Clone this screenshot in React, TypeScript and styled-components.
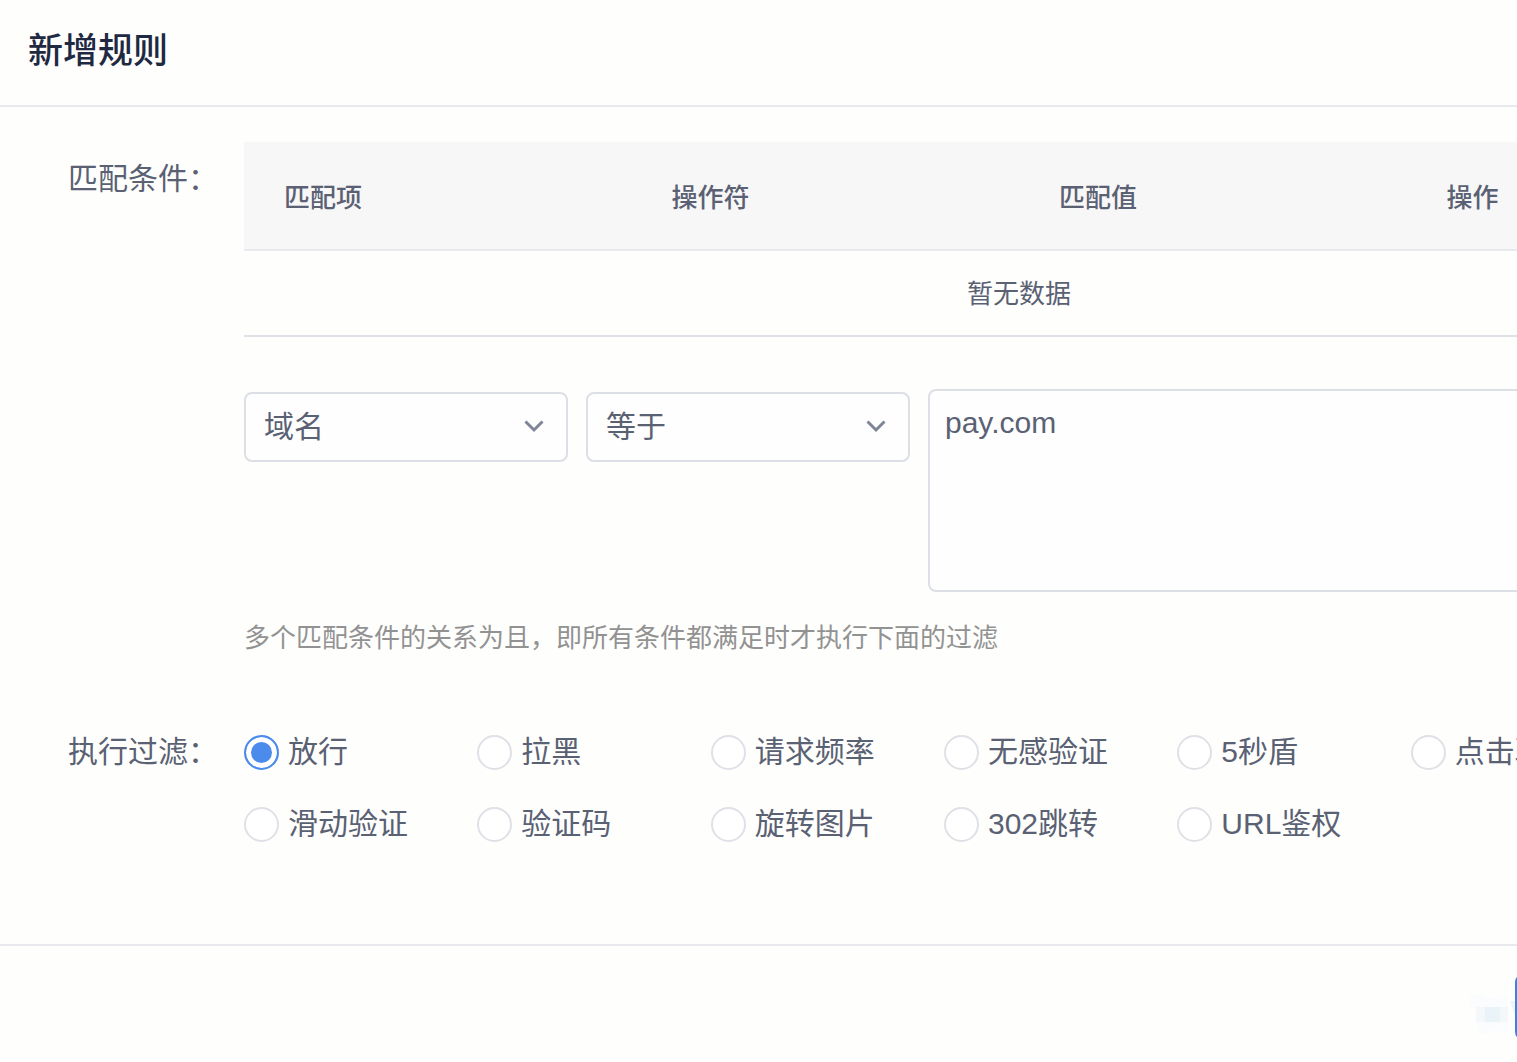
import React, { useState } from "react";
import styled, { createGlobalStyle } from "styled-components";

const GlobalStyle = createGlobalStyle`
  *, *::before, *::after { box-sizing: border-box; }
  body {
    margin: 0;
    background: #fefefd;
    color: #5a6173;
    font: 400 30px/40px "Liberation Sans", "Noto Sans CJK SC", sans-serif;
  }
`;

const Dialog = styled.main`
  overflow: hidden;
`;

const Header = styled.header`
  padding: 25px 28px 28px;
  border-bottom: 2px solid #e8e9ed;
`;

const Title = styled.h1`
  margin: 0;
  color: #1f2942;
  font-size: 35px;
  font-weight: 500;
  line-height: 52px;
`;

const Form = styled.form`
  margin: 0;
`;

const Body = styled.div`
  display: flex;
  flex-direction: column;
  gap: 76px;
  padding: 35px 0 100px;
`;

const Field = styled.div`
  display: flex;
`;

const Label = styled.div<{ $top: number }>`
  flex: 0 0 244px;
  padding-top: ${(p) => p.$top}px;
  padding-right: 26px;
  text-align: right;
`;

const Content = styled.div`
  flex: 1 0 1550px;
`;

const Table = styled.table`
  width: 100%;
  table-layout: fixed;
  border-collapse: separate;
  border-spacing: 0;
  font-size: 26px;
  line-height: 36px;
`;

const Th = styled.th`
  padding: 38px 40px 33px;
  background: #f7f7f7;
  border-bottom: 2px solid #e8eaed;
  text-align: left;
  font-weight: 500;
`;

const Empty = styled.td`
  padding: 25px 40px 23px;
  border-bottom: 2px solid #dfe1e7;
  text-align: center;
`;

const Condition = styled.div`
  display: flex;
  align-items: flex-start;
  gap: 18px;
  padding-top: 52px;
`;

const SelectBox = styled.div`
  position: relative;
  flex: 0 0 324px;
  margin-top: 3px;
  svg {
    position: absolute;
    top: 28px;
    right: 24px;
    pointer-events: none;
  }
`;

const fieldBorder = `
  border: 2px solid #dcdfe6;
  border-radius: 8px;
  background: #fefefe;
  color: inherit;
  font: inherit;
  outline: none;
`;

const Select = styled.select`
  ${fieldBorder}
  display: block;
  width: 100%;
  height: 70px;
  padding: 0 60px 0 18px;
  appearance: none;
`;

const TextArea = styled.textarea`
  ${fieldBorder}
  display: block;
  flex: 1;
  height: 203px;
  padding: 12px 15px;
  resize: none;
`;

const Hint = styled.p`
  margin: 28px 0 0;
  color: #929292;
  font-size: 26px;
  line-height: 36px;
`;

const Options = styled.div`
  display: grid;
  grid-template-columns: repeat(6, 1fr);
  row-gap: 32px;
  width: 1400px;
`;

const Option = styled.label`
  display: flex;
  align-items: center;
  gap: 9px;
  white-space: nowrap;
`;

const Radio = styled.input`
  flex: none;
  width: 35px;
  height: 35px;
  margin: 0;
  appearance: none;
  border: 2px solid #dfe1e7;
  border-radius: 50%;
  background: #fff;
  &:checked {
    border-color: #4a8bec;
    background: #4a8bec;
    box-shadow: inset 0 0 0 5px #fff;
  }
`;

const Footer = styled.footer`
  display: flex;
  align-items: flex-end;
  justify-content: flex-end;
  padding-top: 28px;
  border-top: 2px solid #e8e9ed;
`;

const Submit = styled.button`
  flex: none;
  width: 120px;
  height: 66px;
  margin-right: -118px;
  border: 0;
  border-radius: 8px;
  background: #3b82e6;
  color: #fff;
  font: inherit;
`;

const Chevron = () => (
  <svg width="20" height="14" viewBox="0 0 20 14" fill="none" stroke="#7d8596" strokeWidth="3">
    <path d="M1.5 1.5 L10 10 L18.5 1.5" />
  </svg>
);

const Watermark = () => (
  <svg width="45" height="48" viewBox="0 0 45 48" aria-hidden="true">
    <path d="M0 5 Q3 2 6 3 Q11 0 16 4 Q19 8 24 6 L30 5 Q37 3 38 8 V38 Q36 43 27 38 L20 37 Q17 45 9 40 L6 30 V17 L0 16 Z" fill="#fafcfe" />
    <path d="M6 15 H38 V30 H6 Z" fill="#f4f8fb" />
    <path d="M15 15 H30 V30 H15 Z" fill="#eaf3f7" />
    <path d="M40 9 H45 V24 Z" fill="#edf4fc" />
  </svg>
);

const actions = [
  "放行", "拉黑", "请求频率", "无感验证", "5秒盾", "点击验证",
  "滑动验证", "验证码", "旋转图片", "302跳转", "URL鉴权",
];

function Dropdown({ label, options }: { label: string; options: string[] }) {
  return (
    <SelectBox>
      <Select aria-label={label}>
        {options.map((o) => <option key={o}>{o}</option>)}
      </Select>
      <Chevron />
    </SelectBox>
  );
}

export default function App() {
  const [action, setAction] = useState(actions[0]);
  return (
    <Dialog>
      <GlobalStyle />
      <Header><Title>新增规则</Title></Header>
      <Form onSubmit={(e) => e.preventDefault()}>
        <Body>
          <Field>
            <Label $top={17}>匹配条件：</Label>
            <Content>
              <Table>
                <thead>
                  <tr>
                    <Th>匹配项</Th>
                    <Th>操作符</Th>
                    <Th>匹配值</Th>
                    <Th>操作</Th>
                  </tr>
                </thead>
                <tbody>
                  <tr><Empty colSpan={4}>暂无数据</Empty></tr>
                </tbody>
              </Table>
              <Condition>
                <Dropdown label="匹配项" options={["域名"]} />
                <Dropdown label="操作符" options={["等于"]} />
                <TextArea aria-label="匹配值" defaultValue="pay.com" />
              </Condition>
              <Hint>多个匹配条件的关系为且，即所有条件都满足时才执行下面的过滤</Hint>
            </Content>
          </Field>
          <Field>
            <Label $top={0} id="action-label">执行过滤：</Label>
            <Content>
              <Options role="radiogroup" aria-labelledby="action-label">
                {actions.map((name) => (
                  <Option key={name}>
                    <Radio
                      type="radio"
                      name="action"
                      checked={action === name}
                      onChange={() => setAction(name)}
                    />
                    {name}
                  </Option>
                ))}
              </Options>
            </Content>
          </Field>
        </Body>
        <Footer>
          <Watermark />
          <Submit type="submit" aria-label="确定" />
        </Footer>
      </Form>
    </Dialog>
  );
}
